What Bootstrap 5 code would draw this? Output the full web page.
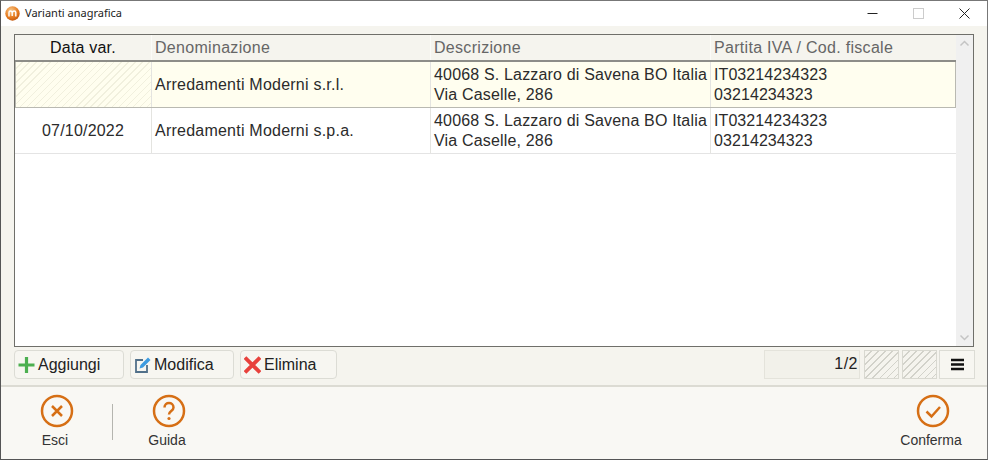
<!DOCTYPE html>
<html lang="it">
<head>
<meta charset="utf-8">
<title>Varianti anagrafica</title>
<link href="https://cdn.jsdelivr.net/npm/bootstrap@5.3.0/dist/css/bootstrap.min.css" rel="stylesheet">
<style>
html,body{margin:0;height:460px;overflow:hidden;background:#f5f4ee;}
body{font-family:"Liberation Sans",Arial,sans-serif;font-size:16px;color:#222;}
.win{width:988px;height:460px;border:1px solid #555;border-top-color:#777;border-right-color:#777;background:#f5f4ee;}
.titlebar{height:25px;background:#fff;padding-left:4px;}
.titlebar .ttl{font-family:"Noto Sans",sans-serif;font-size:11px;color:#222;margin-left:5px;}
.wbtns{margin-left:auto;}
.wbtn{width:46px;height:25px;}
.mainarea{height:360px;padding:8px 13px 0 13px;}
.gridframe{height:313px;border:1px solid #6f6f6a;background:#fff;}
.gridcols{min-width:0;}
.grow-h,.grow-b{display:grid;grid-template-columns:136px 279px 280px 1fr;}
.grow-a{display:grid;grid-template-columns:135px 279px 280px 1fr;}
.grow-h{height:27px;background:#f5f4ee;border-bottom:2px solid #8d8d88;letter-spacing:.3px;}
.grow-h>div{line-height:25px;color:#666;padding-left:3px;border-left:1px solid #fbfbf8;}
.grow-h>div:first-child{color:#111;text-align:center;padding:0;border-left:0;letter-spacing:.2px;}
.grow-a{height:46px;background:#fffeef;border:1px solid #b9b9b1;border-top:0;}
.grow-b{height:46px;border-bottom:1px solid #e4e4e4;}
.grow-a>div,.grow-b>div{line-height:20px;padding:3px 0 0 3px;border-left:1px solid #e4e4e0;white-space:nowrap;color:#2b2b2b;}
.grow-a>div:first-child,.grow-b>div:first-child{border-left:0;padding:0;letter-spacing:.2px;}
.grow-a>div:nth-child(2),.grow-b>div:nth-child(2){letter-spacing:.23px;}
.grow-a>div:nth-child(3),.grow-b>div:nth-child(3){letter-spacing:.17px;}
.grow-a>div:nth-child(4),.grow-b>div:nth-child(4){letter-spacing:.08px;}
.mid{display:flex;align-items:center;}
.grow-b>.ctr{justify-content:center;line-height:1;}
.grow-a>.mid,.grow-b>.mid{padding-top:0;}
.hatch-lt{background:repeating-linear-gradient(135deg,#fffeef 0 4px,#f1f0de 4px 5px);}
.sbar{width:17px;background:#f0f0f0;}
.sbar svg{display:block;}
.tools{height:30px;margin-top:3px;}
.tbtn{height:29px;border:1px solid #dcdcd5;border-radius:4px;background:#f7f6f1;padding:0 0 0 3px;font-size:16px;line-height:1;color:#222;gap:3px;}
.tbtn+.tbtn{margin-left:6px;}
.t1{width:110px;}.t2{width:104px;}.t3{width:97px;}
.pager{margin-left:auto;margin-right:-1px;}
.pcount{width:96px;height:29px;background:#f2f1ea;border:1px solid #e4e3db;text-align:right;padding-right:1px;line-height:26px;letter-spacing:.5px;}
.phatch{width:35px;height:29px;margin-left:4px;border:1px solid #d8d8d0;background:repeating-linear-gradient(135deg,#f5f4ee 0 4px,#d2d2ca 4px 5px);}
.phatch+.phatch{margin-left:3px;}
.pmenu{width:36px;height:29px;border:1px solid #dcdcd5;background:#f7f6f1;margin-left:2px;padding:0;display:flex;align-items:center;justify-content:center;}
.footbar{height:74px;background:#f9f8f4;border-top:2px solid #dcdbd3;}
.fbtn{font-size:14px;line-height:1;color:#333;padding-top:7px;}
.fbtn svg{display:block;margin-bottom:5px;}
.fbtn span{margin-right:4px;}
.fesci{width:84px;margin-left:14px;}
.fsep{width:1px;height:36px;background:#b5b5af;margin:17px 0 0 13px;}
.fguida{width:84px;margin-left:14px;}
.fconf{width:84px;margin-left:auto;margin-right:12px;}
</style>
</head>
<body>
<div class="win d-flex flex-column">
  <div class="titlebar d-flex align-items-center">
    <svg width="15" height="15" viewBox="0 0 15 15"><defs><radialGradient id="g" cx=".4" cy=".3" r=".8"><stop offset="0" stop-color="#f8c98a"/><stop offset=".6" stop-color="#e67a1e"/><stop offset="1" stop-color="#b84f0a"/></radialGradient></defs><circle cx="7.5" cy="7.5" r="7.2" fill="url(#g)"/><path d="M4 10.5V6.5c0-2 2.6-2 3.2 0V10M7.4 6.5c.3-2 3.4-2 3.4 0v4" fill="none" stroke="#fff" stroke-width="1.4"/></svg>
    <span class="ttl">Varianti anagrafica</span>
    <div class="wbtns d-flex">
      <div class="wbtn d-flex align-items-center justify-content-center"><svg width="11" height="11"><path d="M.5 5.5h10" stroke="#222"/></svg></div>
      <div class="wbtn d-flex align-items-center justify-content-center"><svg width="11" height="11"><rect x=".5" y=".5" width="10" height="10" fill="none" stroke="#ccc"/></svg></div>
      <div class="wbtn d-flex align-items-center justify-content-center"><svg width="11" height="11"><path d="M.5.5l10 10M10.500 .5l-10 10" stroke="#222"/></svg></div>
    </div>
  </div>
  <div class="mainarea">
    <div class="gridframe d-flex">
      <div class="gridcols flex-grow-1">
        <div class="grow-h"><div>Data var.</div><div>Denominazione</div><div>Descrizione</div><div>Partita IVA / Cod. fiscale</div></div>
        <div class="grow-a">
          <div class="hatch-lt"></div>
          <div class="mid">Arredamenti Moderni s.r.l.</div>
          <div>40068 S. Lazzaro di Savena BO Italia<br>Via Caselle, 286</div>
          <div>IT03214234323<br>03214234323</div>
        </div>
        <div class="grow-b">
          <div class="mid ctr">07/10/2022</div>
          <div class="mid">Arredamenti Moderni s.p.a.</div>
          <div>40068 S. Lazzaro di Savena BO Italia<br>Via Caselle, 286</div>
          <div>IT03214234323<br>03214234323</div>
        </div>
      </div>
      <div class="sbar d-flex flex-column justify-content-between">
        <svg width="17" height="17"><path d="M4.500 10.500l4-4 4 4" fill="none" stroke="#c4c4c4" stroke-width="1.500"/></svg>
        <svg width="17" height="17"><path d="M4.500 6.500l4 4 4-4" fill="none" stroke="#c4c4c4" stroke-width="1.500"/></svg>
      </div>
    </div>
    <div class="tools d-flex">
      <button type="button" class="tbtn t1 d-flex align-items-center"><svg width="17" height="18" viewBox="0 0 17 18"><path d="M8.500 1v16M.5 9h16" stroke="#4caf50" stroke-width="3.200"/></svg>Aggiungi</button>
      <button type="button" class="tbtn t2 d-flex align-items-center"><svg width="17" height="18" viewBox="0 0 17 18"><path d="M9 4H2v12h11V9" fill="none" stroke="#51708a" stroke-width="1.800"/><path d="M5.500 12.500l1-3.500 7.500-7.500 2.500 2.500-7.500 7.500z" fill="#3d9be0"/></svg>Modifica</button>
      <button type="button" class="tbtn t3 d-flex align-items-center"><svg width="17" height="18" viewBox="0 0 17 18"><path d="M1 1.500l15 15M16 1.500L1 16.500" stroke="#e8413c" stroke-width="3.800"/></svg>Elimina</button>
      <div class="pager d-flex">
        <div class="pcount">1/2</div>
        <div class="phatch"></div>
        <div class="phatch"></div>
        <button type="button" class="pmenu"><svg width="13" height="13"><path d="M0 2h13M0 6.500h13M0 11h13" stroke="#111" stroke-width="2.400"/></svg></button>
      </div>
    </div>
  </div>
  <div class="footbar d-flex">
    <div class="fbtn fesci d-flex flex-column align-items-center">
      <svg width="34" height="34" viewBox="0 0 34 34"><circle cx="17" cy="17" r="15" fill="none" stroke="#d66f15" stroke-width="2.500"/><path d="M12 12l10 10M22 12L12 22" stroke="#d66f15" stroke-width="2.500"/></svg>
      <span>Esci</span>
    </div>
    <div class="fsep"></div>
    <div class="fbtn fguida d-flex flex-column align-items-center">
      <svg width="34" height="34" viewBox="0 0 34 34"><circle cx="17" cy="17" r="15" fill="none" stroke="#d66f15" stroke-width="2.500"/><path d="M12.500 13.500c0-6 9-6 9 0 0 3.500-4.500 3.500-4.500 7" fill="none" stroke="#d66f15" stroke-width="2.500"/><circle cx="17" cy="24.500" r="1.600" fill="#d66f15"/></svg>
      <span>Guida</span>
    </div>
    <div class="fbtn fconf d-flex flex-column align-items-center">
      <svg width="34" height="34" viewBox="0 0 34 34"><circle cx="17" cy="17" r="15" fill="none" stroke="#d66f15" stroke-width="2.500"/><path d="M10.500 17.500l5 5 8.500-9.500" fill="none" stroke="#d66f15" stroke-width="2.500"/></svg>
      <span>Conferma</span>
    </div>
  </div>
</div>
<script src="https://cdn.jsdelivr.net/npm/bootstrap@5.3.0/dist/js/bootstrap.bundle.min.js"></script>
</body>
</html>
